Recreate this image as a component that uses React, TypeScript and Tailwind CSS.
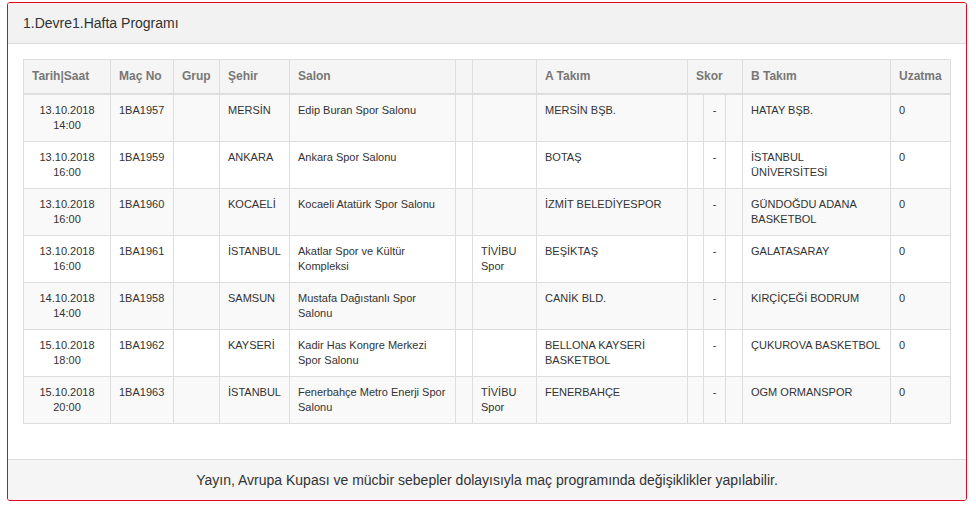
import { Fragment } from "react";

interface MatchRow {
  date: string;
  time: string;
  no: string;
  city: string;
  hall: string;
  tv?: string;
  teamA: React.ReactNode;
  teamB: React.ReactNode;
  ot: string;
}

const rows: MatchRow[] = [
  { date: "13.10.2018", time: "14:00", no: "1BA1957", city: "MERSİN", hall: "Edip Buran Spor Salonu", teamA: "MERSİN BŞB.", teamB: "HATAY BŞB.", ot: "0" },
  {
    date: "13.10.2018",
    time: "16:00",
    no: "1BA1959",
    city: "ANKARA",
    hall: "Ankara Spor Salonu",
    teamA: "BOTAŞ",
    teamB: (
      <Fragment>
        İSTANBUL
        <br />
        ÜNİVERSİTESİ
      </Fragment>
    ),
    ot: "0",
  },
  { date: "13.10.2018", time: "16:00", no: "1BA1960", city: "KOCAELİ", hall: "Kocaeli Atatürk Spor Salonu", teamA: "İZMİT BELEDİYESPOR", teamB: "GÜNDOĞDU ADANA BASKETBOL", ot: "0" },
  { date: "13.10.2018", time: "16:00", no: "1BA1961", city: "İSTANBUL", hall: "Akatlar Spor ve Kültür Kompleksi", tv: "TİVİBU Spor", teamA: "BEŞİKTAŞ", teamB: "GALATASARAY", ot: "0" },
  { date: "14.10.2018", time: "14:00", no: "1BA1958", city: "SAMSUN", hall: "Mustafa Dağıstanlı Spor Salonu", teamA: "CANİK BLD.", teamB: "KIRÇİÇEĞİ BODRUM", ot: "0" },
  { date: "15.10.2018", time: "18:00", no: "1BA1962", city: "KAYSERİ", hall: "Kadir Has Kongre Merkezi Spor Salonu", teamA: "BELLONA KAYSERİ BASKETBOL", teamB: "ÇUKUROVA BASKETBOL", ot: "0" },
  { date: "15.10.2018", time: "20:00", no: "1BA1963", city: "İSTANBUL", hall: "Fenerbahçe Metro Enerji Spor Salonu", tv: "TİVİBU Spor", teamA: "FENERBAHÇE", teamB: "OGM ORMANSPOR", ot: "0" },
];

const widths = [87, 63, 46, 70, 166, 17, 64, 151, 16, 22, 17, 148, 60];

const th = "border border-[#dddddd] border-b-2 px-2 py-2 text-left align-bottom text-[12px] font-bold leading-[17px] text-[#777777]";
const td = "border border-[#dddddd] px-2 py-2 align-top text-[11px] leading-[15px] text-[#333333]";

export default function App() {
  return (
    <div className="pl-[7px] pt-[2px]" style={{ fontFamily: '"Liberation Sans", Arial, sans-serif' }}>
      <div className="w-[960px] overflow-hidden rounded-[3px] border border-[#e0061f] bg-white">
        {/* heading */}
        <div className="border-b border-[#dddddd] bg-[#f2f2f2] px-[15px] py-[10px] text-[14px] leading-[20px] text-[#333333]">
          1.Devre1.Hafta Programı
        </div>

        {/* body */}
        <div className="p-[15px]">
          <table className="mb-[20px] w-[927px] table-fixed border-collapse border border-[#dddddd]">
            <colgroup>
              {widths.map((w, i) => (
                <col key={i} style={{ width: w }} />
              ))}
            </colgroup>
            <thead>
              <tr className="bg-[#f5f5f5]">
                <th className={th}>Tarih|Saat</th>
                <th className={th}>Maç No</th>
                <th className={th}>Grup</th>
                <th className={th}>Şehir</th>
                <th className={th}>Salon</th>
                <th className={th}></th>
                <th className={th}></th>
                <th className={th}>A Takım</th>
                <th className={th} colSpan={3}>
                  Skor
                </th>
                <th className={th}>B Takım</th>
                <th className={th}>Uzatma</th>
              </tr>
            </thead>
            <tbody>
              {rows.map((r, i) => (
                <tr key={r.no} className={i % 2 === 0 ? "bg-[#f9f9f9]" : "bg-white"}>
                  <td className={`${td} text-center`}>
                    {r.date}
                    <br />
                    {r.time}
                  </td>
                  <td className={td}>{r.no}</td>
                  <td className={td}></td>
                  <td className={td}>{r.city}</td>
                  <td className={td}>{r.hall}</td>
                  <td className={td}></td>
                  <td className={td}>{r.tv}</td>
                  <td className={td}>{r.teamA}</td>
                  <td className={`${td} px-0`}></td>
                  <td className={`${td} px-0 text-center`}>-</td>
                  <td className={`${td} px-0`}></td>
                  <td className={td}>{r.teamB}</td>
                  <td className={td}>{r.ot}</td>
                </tr>
              ))}
            </tbody>
          </table>
        </div>

        {/* footer */}
        <div className="border-t border-[#dddddd] bg-[#f5f5f5] px-[15px] py-[10px] text-center text-[14px] leading-[20px] text-[#333333]">
          Yayın, Avrupa Kupası ve mücbir sebepler dolayısıyla maç programında değişiklikler yapılabilir.
        </div>
      </div>
    </div>
  );
}
